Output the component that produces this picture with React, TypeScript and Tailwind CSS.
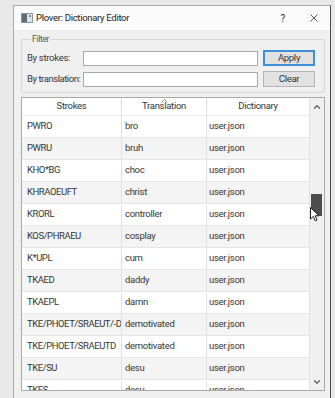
import { ChevronUp, ChevronDown } from 'lucide-react';

const rows: [string, string][] = [
  ['PWRO', 'bro'],
  ['PWRU', 'bruh'],
  ['KHO*BG', 'choc'],
  ['KHRAOEUFT', 'christ'],
  ['KRORL', 'controller'],
  ['KOS/PHRAEU', 'cosplay'],
  ['K*UPL', 'cum'],
  ['TKAED', 'daddy'],
  ['TKAEPL', 'damn'],
  ['TKE/PHOET/SRAEUT/-D', 'demotivated'],
  ['TKE/PHOET/SRAEUTD', 'demotivated'],
  ['TKE/SU', 'desu'],
  ['TKES', 'desu'],
];

export default function App() {
  return (
    <div className="w-[335px] h-[398px] overflow-hidden bg-[#e9e9e9] pt-[5px] pl-[13px] pr-[4px] font-['Roboto',sans-serif] text-[9.5px] tracking-[-0.3px] text-[#363636]">
      {/* Window */}
      <div className="relative h-[400px] border border-[#a8a8a8] border-r-[#4a4a4a] bg-[#f0f0f0] flex flex-col">
        {/* Title bar */}
        <div className="h-[24px] shrink-0 bg-[#fbfbfb] flex items-center pl-[7px] pr-[12px]">
          <svg width="12" height="10" viewBox="0 0 12 10" className="shrink-0">
            <rect x="0.5" y="0.5" width="11" height="9" fill="#dfe4ea" stroke="#8b96a3" />
            <rect x="1" y="1" width="5" height="8" fill="#5f6b78" />
            <rect x="8" y="2" width="2" height="2" fill="#7a8693" />
          </svg>
          <span className="ml-[3px] text-[#222]">Plover: Dictionary Editor</span>
          <span className="ml-auto text-[10px] text-[#333]">?</span>
          <svg width="8" height="8" viewBox="0 0 8 8" className="ml-[25px]">
            <path d="M0.5 0.5 L7.5 7.5 M7.5 0.5 L0.5 7.5" stroke="#555" strokeWidth="1" />
          </svg>
        </div>

        {/* Body */}
        <div className="flex-1 flex flex-col pl-[7px] pr-[5px] pt-[1px]">
          {/* Filter group */}
          <fieldset className="border border-[#d7d7d7] rounded-[2px] pl-[5px] pr-[9px] pb-[5px]">
            <legend className="ml-[4px] px-[1px] text-[8.5px] leading-[16px] text-[#555]">Filter</legend>
            <div className="mt-[3px] flex flex-col gap-[5px]">
              <div className="flex items-center h-[16px]">
                <span className="w-[56px] shrink-0 whitespace-nowrap">By strokes:</span>
                <div className="w-[175px] h-[15px] bg-white border border-[#a9a9a9]" />
                <button className="ml-[5px] w-[52px] h-[16px] bg-[#e1e1e1] border-2 border-[#3f8fd6] leading-none text-[#333]">
                  Apply
                </button>
              </div>
              <div className="flex items-center h-[16px]">
                <span className="w-[56px] shrink-0 whitespace-nowrap tracking-[-0.45px]">By translation:</span>
                <div className="w-[175px] h-[15px] bg-white border border-[#a9a9a9]" />
                <button className="ml-[5px] w-[52px] h-[16px] bg-[#e1e1e1] border border-[#b5b5b5] leading-none text-[#333]">
                  Clear
                </button>
              </div>
            </div>
          </fieldset>

          {/* Table */}
          <div className="mt-[4px] h-[294px] w-[304px] border border-[#a9a9a9] bg-white flex overflow-hidden">
            <div className="w-[287px] flex flex-col">
              <div className="h-[18px] shrink-0 flex bg-white border-b border-[#ececec]">
                <div className="w-[99px] flex items-center justify-center">Strokes</div>
                <div className="relative w-[85px] border-l border-[#dcdcdc] flex items-center justify-center">
                  <svg width="7" height="4" viewBox="0 0 7 4" className="absolute top-[1px] left-[39px]">
                    <path d="M0.5 3.5 L3.5 0.5 L6.5 3.5" fill="none" stroke="#888" strokeWidth="1" />
                  </svg>
                  Translation
                </div>
                <div className="w-[103px] border-l border-[#dcdcdc] flex items-center justify-center">Dictionary</div>
              </div>
              {rows.map(([s, t], i) => (
                <div
                  key={i}
                  className={`h-[22px] shrink-0 flex items-center border-b border-[#e6e6e6] ${i % 2 === 1 ? 'bg-[#f4f4f4]' : 'bg-white'}`}
                >
                  <div className="w-[99px] pl-[5px] whitespace-nowrap overflow-hidden tracking-[-0.45px]">{s}</div>
                  <div className="w-[85px] h-full flex items-center border-l border-[#e0e0e0] pl-[3px]">{t}</div>
                  <div className="w-[103px] h-full flex items-center border-l border-[#e0e0e0] pl-[2px]">user.json</div>
                </div>
              ))}
            </div>
            {/* Scrollbar */}
            <div className="relative w-[15px] bg-[#f0f0f0] border-l border-[#e2e2e2] flex flex-col items-center">
              <div className="h-[17px] flex items-center justify-center">
                <ChevronUp size={10} strokeWidth={3} className="text-[#606060]" />
              </div>
              <div className="flex-1 w-full pt-[79px] px-[1px]">
                <div className="h-[22px] w-[11px] bg-[#4d4d4d]" />
              </div>
              <div className="h-[17px] flex items-center justify-center">
                <ChevronDown size={10} strokeWidth={3} className="text-[#606060]" />
              </div>
              <svg width="10" height="15" viewBox="0 0 10 15" className="absolute left-[0px] top-[109px]">
                <path d="M0.5 0.5 L0.5 12 L3.3 9.4 L5.2 13.8 L7 13 L5.2 8.8 L9 8.8 Z" fill="#fff" stroke="#222" strokeWidth="1" strokeLinejoin="round" />
              </svg>
            </div>
          </div>
        </div>
      </div>
    </div>
  );
}
